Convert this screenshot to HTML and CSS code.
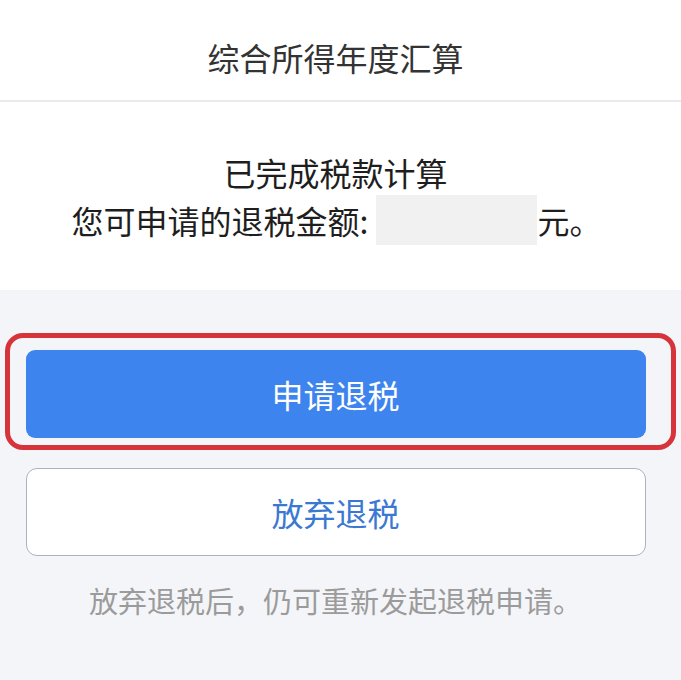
FILE: index.html
```html
<!DOCTYPE html>
<html lang="zh-CN">
<head>
<meta charset="utf-8">
<title>综合所得年度汇算</title>
<link rel="stylesheet" href="styles.css">
</head>
<body>
<div class="page">
  <header class="header">综合所得年度汇算</header>
  <section class="result">
    <p class="line">已完成税款计算</p>
    <p class="line amount-line">您可申请的退税金额:<span class="amount"></span>元。</p>
  </section>
  <section class="actions">
    <div class="primary-wrap">
      <button class="btn btn-primary">申请退税</button>
      <span class="highlight"></span>
    </div>
    <button class="btn btn-secondary">放弃退税</button>
    <p class="note">放弃退税后，仍可重新发起退税申请。</p>
  </section>
</div>
</body>
</html>
```
FILE: styles.css
```css
html, body {
  margin: 0;
  padding: 0;
  background: #f4f5f8;
  font-family: "Noto Sans CJK SC", "Noto Sans", sans-serif;
}
.page {
  width: 681px;
  min-height: 680px;
  display: flex;
  flex-direction: column;
}
.header {
  height: 102px;
  background: #fff;
  border-bottom: 2px solid #e8eaed;
  display: flex;
  align-items: center;
  justify-content: center;
  font-size: 32px;
  color: #333;
  padding: 14px 10px 0 0;
  box-sizing: border-box;
}
.result {
  background: #fff;
  height: 188px;
  display: flex;
  flex-direction: column;
  align-items: center;
  padding: 48px 10px 0 0;
  box-sizing: border-box;
}
.line {
  margin: 0;
  font-size: 32px;
  line-height: 45px;
  color: #1e1e1e;
}
.amount-line {
  display: flex;
  align-items: center;
  margin-left: 2px;
}
.amount {
  display: inline-block;
  width: 161px;
  height: 50px;
  background: #f1f1f1;
  margin-left: 8px;
}
.actions {
  display: flex;
  flex-direction: column;
  align-items: center;
  padding: 60px 10px 0 0;
}
.primary-wrap {
  position: relative;
  width: 620px;
}
.btn {
  display: flex;
  align-items: center;
  justify-content: center;
  width: 620px;
  height: 88px;
  border-radius: 9px;
  font-family: "Noto Sans CJK SC", "Noto Sans", sans-serif;
  font-size: 32px;
  box-sizing: border-box;
  padding: 0;
}
.btn-primary {
  background: #3e84ee;
  color: #fff;
  border: none;
}
.highlight {
  position: absolute;
  top: -17px;
  bottom: -12px;
  left: -21px;
  right: -30px;
  border: 5px solid #d6333b;
  border-radius: 18px;
  pointer-events: none;
}
.btn-secondary {
  margin-top: 30px;
  background: #fff;
  color: #3a78d2;
  border: 1.5px solid #a9b3c0;
  border-radius: 11px;
}
.note {
  margin: 24px 0 0;
  font-size: 29px;
  color: #9b9b9b;
  line-height: 40px;
}
```
